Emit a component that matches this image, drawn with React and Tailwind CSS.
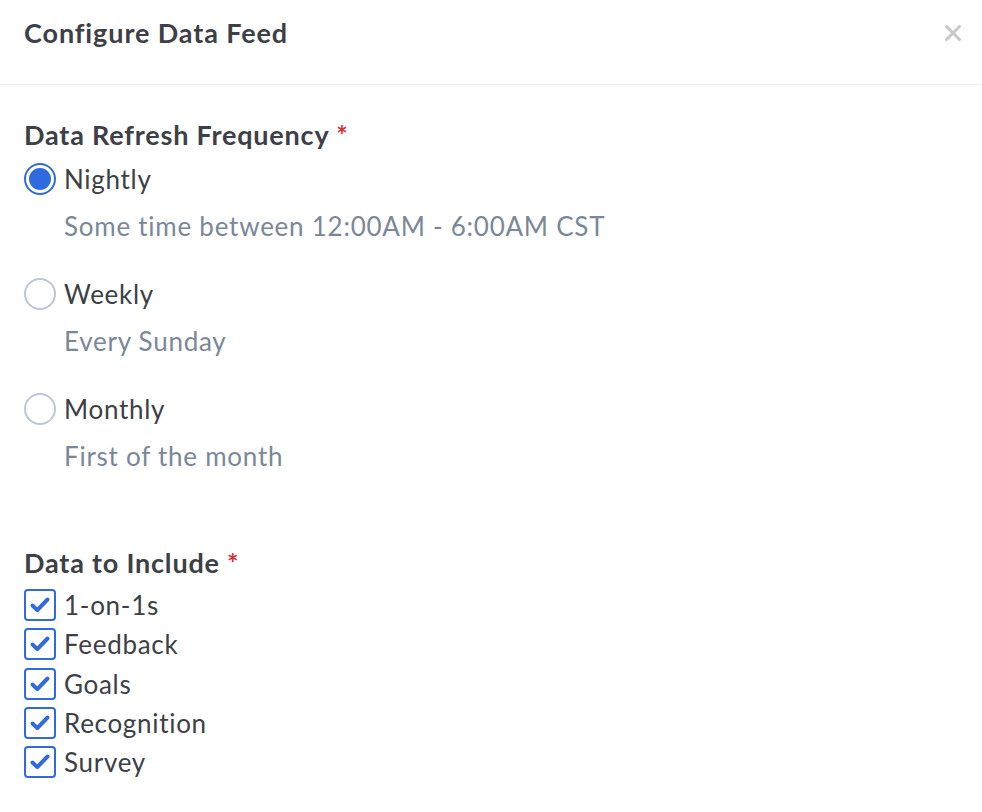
import React, { useState } from "react";

const FONT = { fontFamily: "Lato, 'Liberation Sans', sans-serif" };

const FREQUENCIES = [
  { id: "nightly", label: "Nightly", note: "Some time between 12:00AM - 6:00AM CST" },
  { id: "weekly", label: "Weekly", note: "Every Sunday" },
  { id: "monthly", label: "Monthly", note: "First of the month" },
];

const DATA_TYPES = ["1-on-1s", "Feedback", "Goals", "Recognition", "Survey"];

function Radio({ checked }) {
  return (
    <span
      className={
        "flex h-[32px] w-[32px] shrink-0 items-center justify-center rounded-full border-2 " +
        (checked ? "border-[#2f6bdf]" : "border-[#bcc6d6]")
      }
    >
      {checked && <span className="h-[22px] w-[22px] rounded-full bg-[#2f6bdf]" />}
    </span>
  );
}

function Checkbox({ checked }) {
  return (
    <span className="flex h-[32px] w-[32px] shrink-0 items-center justify-center rounded-[4px] border-2 border-[#2f6bdf] bg-white">
      {checked && (
        <svg width="22" height="22" viewBox="0 0 22 22" fill="none">
          <path d="M3.5 11.5l4.8 4.6L18.5 5.5" stroke="#2f6bdf" strokeWidth="4" strokeLinecap="round" strokeLinejoin="round" />
        </svg>
      )}
    </span>
  );
}

export default function App() {
  const [freq, setFreq] = useState("nightly");
  const [included, setIncluded] = useState(DATA_TYPES);

  function toggle(name) {
    setIncluded((cur) => (cur.includes(name) ? cur.filter((n) => n !== name) : [...cur, name]));
  }

  return (
    <div className="min-h-[812px] w-[982px] bg-white text-[#3d4046]" style={FONT}>
      <div className="flex h-[85px] items-start justify-between border-b border-[#eceef2] pl-[24px] pr-[20px] pt-[16px]">
        <h1 className="text-[27px] font-bold leading-[34px] tracking-[0.9px]">Configure Data Feed</h1>
        <button className="mt-[8px] text-[#c8c8c8]">
          <svg width="18" height="18" viewBox="0 0 18 18">
            <path d="M2.5 2.5l13 13M15.5 2.5l-13 13" stroke="currentColor" strokeWidth="3" strokeLinecap="round" />
          </svg>
        </button>
      </div>

      <div className="px-[24px] pt-[34px]">
        <div className="text-[27px] font-bold leading-[32px] tracking-[0.8px]">
          Data Refresh Frequency <span className="text-[#d0343b]">*</span>
        </div>

        <div className="mt-[6px] flex flex-col gap-[21px]">
          {FREQUENCIES.map((f) => (
            <label key={f.id} className="flex cursor-pointer flex-col" onClick={() => setFreq(f.id)}>
              <div className="flex h-[44px] items-center gap-[8px]">
                <Radio checked={freq === f.id} />
                <span className="text-[26px] tracking-[0.7px]">{f.label}</span>
              </div>
              <div className="flex h-[50px] items-center pl-[40px] text-[26px] tracking-[0.75px] text-[#7b8799]">{f.note}</div>
            </label>
          ))}
        </div>

        <div className="mt-[66px] text-[27px] font-bold leading-[32px] tracking-[0.8px]">
          Data to Include <span className="text-[#d0343b]">*</span>
        </div>

        <div className="mt-[10px] flex flex-col gap-[7.3px]">
          {DATA_TYPES.map((name) => (
            <label key={name} className="flex cursor-pointer items-center gap-[8px]" onClick={() => toggle(name)}>
              <Checkbox checked={included.includes(name)} />
              <span className="text-[26px] leading-[32px] tracking-[0.7px]">{name}</span>
            </label>
          ))}
        </div>
      </div>
    </div>
  );
}
